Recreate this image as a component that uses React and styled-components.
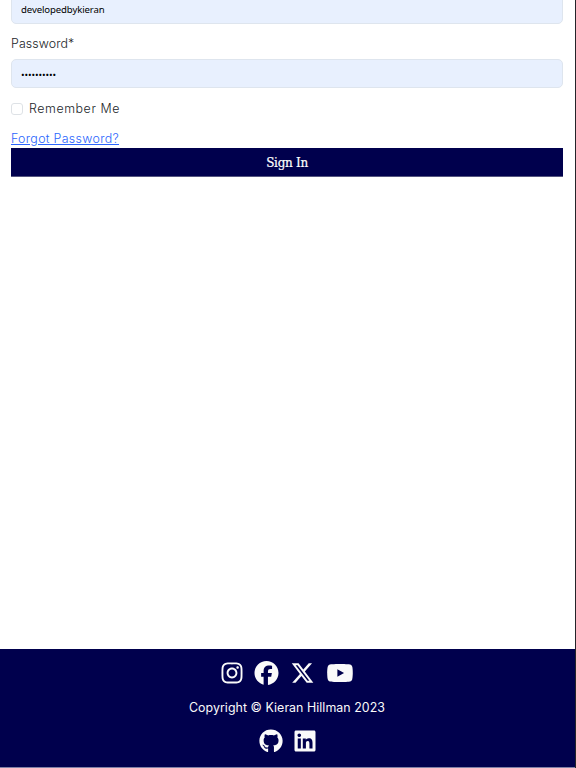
import React from "react";
import styled, { createGlobalStyle } from "styled-components";
import { FaInstagram, FaFacebook, FaXTwitter, FaYoutube, FaGithub, FaLinkedin } from "react-icons/fa6";

const GlobalStyle = createGlobalStyle`
  * { box-sizing: border-box; }
  body { margin: 0; background: #fff; overflow: hidden; }
`;

const Page = styled.div`
  display: flex;
  flex-direction: column;
  height: 768px;
  overflow: hidden;
  border-right: 1px solid #242429;
  font-family: Inter, sans-serif;
  font-size: 12.4px;
  color: #212529;
`;

const Form = styled.form`
  flex: 1;
  display: flex;
  flex-direction: column;
  align-items: flex-start;
  padding: 0 12px 0 11px;
`;

const Field = styled.input`
  flex: none;
  width: 100%;
  height: 29px;
  margin-top: ${(p) => p.$top}px;
  padding: ${(p) => p.$inset || 0}px 9px 0;
  border: 1px solid #dee5ee;
  border-radius: 5px;
  outline: none;
  background: #e8f0fe;
  color: #000;
  font: 9.6px "Noto Sans", sans-serif;
  letter-spacing: -0.12px;
`;

const Label = styled.label`
  margin-top: 11px;
  height: 18px;
  line-height: 18px;
  font-weight: 300;
  letter-spacing: 0.1px;
`;

const CheckRow = styled.label`
  display: flex;
  align-items: center;
  gap: 6px;
  height: 18px;
  margin-top: 12px;
  line-height: 18px;
  font-weight: 300;
  letter-spacing: 0.58px;
`;

const Checkbox = styled.input`
  appearance: none;
  width: 12px;
  height: 12px;
  margin: 0;
  border: 1px solid #dee2e6;
  border-radius: 3px;
  background: #fff;
`;

const ForgotLink = styled.a`
  margin-top: 12px;
  height: 18px;
  line-height: 18px;
  font-weight: 300;
  letter-spacing: 0.32px;
  color: #2b65fd;
  text-decoration: underline;
  text-underline-offset: 1px;
`;

const SubmitButton = styled.button`
  width: 100%;
  height: 29px;
  padding: 2px 0 0;
  border: 0;
  border-bottom: 1px solid #55557f;
  background: #00004d;
  color: #fff;
  font: 12px/26px "DejaVu Serif", serif;
  letter-spacing: -0.3px;
  -webkit-text-stroke: 0.2px #fff;
`;

const Footer = styled.footer`
  flex: none;
  height: 119px;
  display: flex;
  flex-direction: column;
  align-items: center;
  padding: 12px 1px 0 0;
  border-bottom: 1px solid #8080a6;
  background: #00004d;
  color: #fafafa;
`;

const IconRow = styled.div`
  display: flex;
  height: 24px;
  gap: 11px;
`;

const IconLink = styled.a`
  display: flex;
  width: ${(p) => p.$width}px;
  height: 24px;
  color: inherit;
  svg { width: 100%; height: 100%; }
`;

const Copyright = styled.p`
  height: 18px;
  margin: 14px 0 12px;
  line-height: 18px;
  font-weight: 400;
  letter-spacing: 0.05px;
  white-space: nowrap;
`;

export default function App() {
  return (
    <>
      <GlobalStyle />
      <Page>
        <Form onSubmit={(e) => e.preventDefault()}>
          <Field $top={-5} aria-label="Username" defaultValue="developedbykieran" />
          <Label htmlFor="password">Password*</Label>
          <Field id="password" $top={6} $inset={1} type="password" defaultValue="abcdefghij" />
          <CheckRow>
            <Checkbox type="checkbox" />
            Remember Me
          </CheckRow>
          <ForgotLink href="#">Forgot Password?</ForgotLink>
          <SubmitButton type="submit">Sign In</SubmitButton>
        </Form>
        <Footer>
          <IconRow>
            <IconLink href="#" aria-label="Instagram" $width={22}><FaInstagram /></IconLink>
            <IconLink href="#" aria-label="Facebook" $width={25}><FaFacebook /></IconLink>
            <IconLink href="#" aria-label="X" $width={25}><FaXTwitter /></IconLink>
            <IconLink href="#" aria-label="YouTube" $width={28}><FaYoutube /></IconLink>
          </IconRow>
          <Copyright>Copyright © Kieran Hillman 2023</Copyright>
          <IconRow>
            <IconLink href="#" aria-label="GitHub" $width={24}><FaGithub /></IconLink>
            <IconLink href="#" aria-label="LinkedIn" $width={22}><FaLinkedin /></IconLink>
          </IconRow>
        </Footer>
      </Page>
    </>
  );
}
